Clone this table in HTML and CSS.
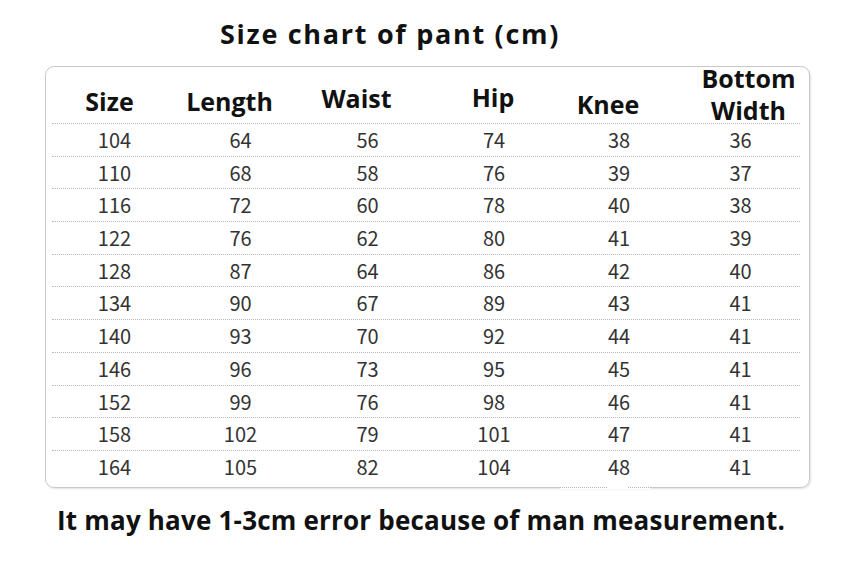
FILE: index.html
```html
<!DOCTYPE html>
<html>
<head>
<meta charset="utf-8">
<link rel="stylesheet" href="styles.css">
</head>
<body>
<h1 class="title">Size chart of pant (cm)</h1>
<div class="box">
  <div class="row head">
    <div class="h h-size">Size</div>
    <div class="h h-length">Length</div>
    <div class="h h-waist">Waist</div>
    <div class="h h-hip">Hip</div>
    <div class="h h-knee">Knee</div>
    <div class="h h-bottom">Bottom<br>Width</div>
  </div>
  <div class="row"><span>104</span><span>64</span><span>56</span><span>74</span><span>38</span><span>36</span></div>
  <div class="row"><span>110</span><span>68</span><span>58</span><span>76</span><span>39</span><span>37</span></div>
  <div class="row"><span>116</span><span>72</span><span>60</span><span>78</span><span>40</span><span>38</span></div>
  <div class="row"><span>122</span><span>76</span><span>62</span><span>80</span><span>41</span><span>39</span></div>
  <div class="row"><span>128</span><span>87</span><span>64</span><span>86</span><span>42</span><span>40</span></div>
  <div class="row"><span>134</span><span>90</span><span>67</span><span>89</span><span>43</span><span>41</span></div>
  <div class="row"><span>140</span><span>93</span><span>70</span><span>92</span><span>44</span><span>41</span></div>
  <div class="row"><span>146</span><span>96</span><span>73</span><span>95</span><span>45</span><span>41</span></div>
  <div class="row"><span>152</span><span>99</span><span>76</span><span>98</span><span>46</span><span>41</span></div>
  <div class="row"><span>158</span><span>102</span><span>79</span><span>101</span><span>47</span><span>41</span></div>
  <div class="row"><span>164</span><span>105</span><span>82</span><span>104</span><span>48</span><span>41</span></div>
  <div class="gap"><i class="seg seg-a"></i><i class="seg seg-b"></i></div>
</div>
<p class="note">It may have 1-3cm error because of man measurement.</p>
</body>
</html>
```

FILE: styles.css
```css
html, body {
  margin: 0;
  padding: 0;
  background: #fff;
}
body {
  width: 850px;
  height: 567px;
  overflow: hidden;
}
.title {
  margin: 0;
  padding: 20px 0 0 220px;
  height: 66px;
  box-sizing: border-box;
  font-family: "Open Sans", sans-serif;
  font-weight: 700;
  font-size: 27px;
  line-height: 27px;
  letter-spacing: 1.7px;
  color: #111;
}
.box {
  position: relative;
  margin: 0 0 0 45px;
  width: 765px;
  height: 422px;
  box-sizing: border-box;
  border: 1.5px solid #c9c9c9;
  border-radius: 9px;
  box-shadow: 1px 1px 2px rgba(0,0,0,0.12);
  padding: 0 9px 0 6px;
}
.row {
  display: grid;
  grid-template-columns: 125px 127px 127px 126px 124px 119px;
  height: 32.7px;
  box-sizing: border-box;
  border-top: 1px dotted #b9b9b9;
  align-items: center;
  font-family: "Noto Sans CJK SC", "Noto Sans", sans-serif;
  font-size: 20px;
  line-height: 31.7px;
  color: #333;
  text-align: center;
}
.row.head {
  height: 56px;
  grid-template-rows: 56px;
  border-top: none;
  align-items: end;
  font-family: "Open Sans", sans-serif;
  font-weight: 700;
  font-size: 25px;
  line-height: 25px;
  color: #111;
}
.h-size { padding: 0 10px 9px 0; }
.h-length { padding: 0 22px 9px 0; }
.h-waist { padding: 0 22px 12px 0; }
.h-hip { padding: 0 2px 13px 0; }
.h-knee { padding: 0 22px 6px 0; }
.h-bottom { line-height: 32px; padding: 0 0 0 16px; margin-bottom: -3px; }
.gap {
  position: absolute;
  left: 514px;
  bottom: -2px;
  width: 91px;
  height: 3px;
  background: #fff;
}
.seg {
  position: absolute;
  top: 1px;
  height: 0;
  border-top: 1px dotted #b9b9b9;
}
.seg-a { left: 0; width: 47px; }
.seg-b { left: 68px; width: 23px; }
.note {
  margin: 0;
  padding: 19px 0 0 57px;
  font-family: "Open Sans", sans-serif;
  font-weight: 700;
  font-size: 26px;
  line-height: 26px;
  letter-spacing: 0.2px;
  color: #111;
}
```
